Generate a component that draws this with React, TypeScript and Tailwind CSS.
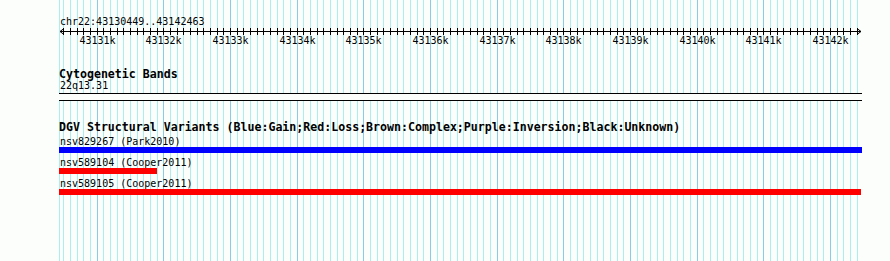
const START = 43130449;
const END = 43142463;

// bp -> page x, same scale as the browser image
const bpX = (bp: number) => Math.round(60 + ((bp - START) * 801) / (END - START));

const minors: number[] = [];
for (let bp = 43130500; bp <= END; bp += 100) minors.push(bp);
const majors = minors.filter((bp) => bp % 1000 === 0);

function Grid() {
  return (
    <svg className="absolute inset-0 -z-10" width={890} height={261}>
      <line x1={59.5} y1={0} x2={59.5} y2={261} stroke="#aaeeee" />
      {minors.map((bp) => (
        <line
          key={bp}
          x1={bpX(bp) + 0.5}
          y1={0}
          x2={bpX(bp) + 0.5}
          y2={261}
          stroke={bp % 1000 === 0 ? "#88cce8" : "#aaeeee"}
        />
      ))}
    </svg>
  );
}

function Ruler() {
  // local coords: x = page x - 59, y = page y - 28
  const y = 3.5;
  return (
    <svg className="block" width={803} height={22}>
      <line x1={1} y1={y} x2={802} y2={y} stroke="#000" />
      <polyline points={`5,${y - 3} 1,${y} 5,${y + 3}`} fill="none" stroke="#000" />
      <polyline points={`798,${y - 3} 802,${y} 798,${y + 3}`} fill="none" stroke="#000" />
      {minors.map((bp) => (
        <line
          key={bp}
          x1={bpX(bp) - 59 + 0.5}
          y1={0}
          x2={bpX(bp) - 59 + 0.5}
          y2={7}
          stroke="#000"
        />
      ))}
      {majors.map((bp) => (
        <text
          key={bp}
          x={bpX(bp) - 59 + 0.5}
          y={16}
          textAnchor="middle"
          fontSize={10}
          fontFamily="'DejaVu Sans Mono', monospace"
          fill="#000"
        >
          {bp / 1000}k
        </text>
      ))}
    </svg>
  );
}

function Feature({ label, color, width, gap }: { label: string; color: string; width: string; gap: string }) {
  return (
    <>
      <div className={`text-[10px] leading-[11px] pl-[1px] ${gap}`}>{label}</div>
      <div className={`h-[6px] ${color} ${width}`} />
    </>
  );
}

export default function App() {
  return (
    <div className="relative isolate w-[890px] h-[261px] overflow-hidden bg-[#fcfefc] text-black font-['DejaVu_Sans_Mono',monospace]">
      <Grid />
      <div className="w-[862px] pl-[59px] pt-[15px]">
        <div className="text-[10px] leading-[13px] pl-[1px]">chr22:43130449..43142463</div>
        <Ruler />

        <div className="mt-[18px] text-[11.6px] leading-[12px] font-bold">Cytogenetic Bands</div>
        <div className="text-[10px] leading-[11px] pl-[1px]">22q13.31</div>
        <div className="mt-[2px] h-[8px] border-y border-black bg-[#fcfefc]" />

        <div className="mt-[20px] text-[11.6px] leading-[12px] font-bold whitespace-nowrap">
          DGV Structural Variants (Blue:Gain;Red:Loss;Brown:Complex;Purple:Inversion;Black:Unknown)
        </div>
        <Feature label="nsv829267 (Park2010)" color="bg-[#0000ff]" width="w-[803px]" gap="mt-[3px]" />
        <Feature label="nsv589104 (Cooper2011)" color="bg-[#ff0000]" width="w-[98px]" gap="mt-[4px]" />
        <Feature label="nsv589105 (Cooper2011)" color="bg-[#ff0000]" width="w-[802px]" gap="mt-[4px]" />
      </div>
    </div>
  );
}
